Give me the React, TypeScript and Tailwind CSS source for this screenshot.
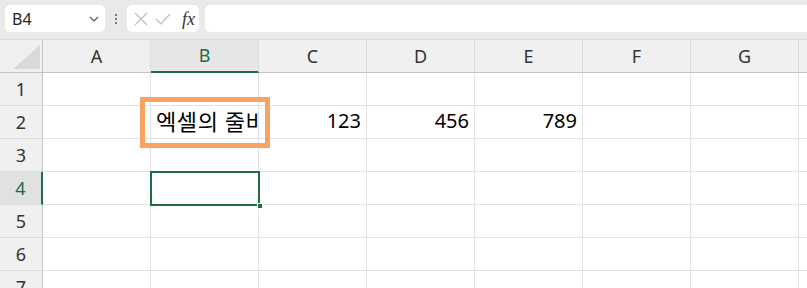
import React from "react";

const COLS = ["A", "B", "C", "D", "E", "F", "G"];
const ROWS = [1, 2, 3, 4, 5, 6, 7];

const data: Record<string, { v: string; align: "left" | "right"; size: string }> = {
  "B2": { v: "엑셀의 줄바꿈", align: "left", size: "text-[22px] tracking-[0.6px]" },
  "C2": { v: "123", align: "right", size: "text-[20px]" },
  "D2": { v: "456", align: "right", size: "text-[20px]" },
  "E2": { v: "789", align: "right", size: "text-[20px]" },
};

const font = { fontFamily: '"Noto Sans", "Noto Sans CJK KR", sans-serif' };

export default function App() {
  return (
    <div className="w-[807px] h-[288px] overflow-hidden bg-white relative" style={font}>
      {/* toolbar */}
      <div className="h-[40px] bg-[#e9e9e9] flex items-start pt-[5px] border-b border-[#dcdcdc]">
        <div className="ml-[5px] w-[100px] h-[27px] bg-white rounded-[5px] flex items-center justify-between pl-[7px] pr-[6px] text-[16px] text-[#222]">
          <span>B4</span>
          <svg width="10" height="6" viewBox="0 0 10 6" className="mt-[1px]">
            <path d="M1 1 L5 5 L9 1" fill="none" stroke="#555" strokeWidth="1.2" />
          </svg>
        </div>
        <div className="w-[22px] h-[27px] flex flex-col items-center justify-center gap-[2px]">
          <div className="w-[2px] h-[2px] bg-[#555] rounded-full" />
          <div className="w-[2px] h-[2px] bg-[#555] rounded-full" />
          <div className="w-[2px] h-[2px] bg-[#555] rounded-full" />
        </div>
        <div className="w-[72px] h-[27px] bg-white rounded-[5px] flex items-center pl-[7px] gap-[7px]">
          <svg width="14" height="14" viewBox="0 0 14 14">
            <path d="M1 1 L13 13 M13 1 L1 13" stroke="#bdbdbd" strokeWidth="1.2" fill="none" />
          </svg>
          <svg width="16" height="14" viewBox="0 0 16 14">
            <path d="M1 7 L6 12 L15 2" stroke="#bdbdbd" strokeWidth="1.2" fill="none" />
          </svg>
          <span
            className="ml-[4px] text-[18px] italic text-[#333] leading-none"
            style={{ fontFamily: '"Liberation Serif", "DejaVu Serif", serif' }}
          >
            fx
          </span>
        </div>
        <div className="ml-[6px] flex-1 h-[27px] bg-white rounded-l-[5px]" />
      </div>

      {/* grid */}
      <div className="relative">
        <div className="grid grid-cols-[43px_repeat(7,108px)_1fr] auto-rows-[33px]">
          {/* header row */}
          <div className="bg-[#f0f0f0] border-r border-b border-[#c4c4c4] relative">
            <svg width="43" height="33" className="absolute left-0 top-0">
              <polygon points="40,5 40,29 13,29" fill="#d9d9d9" />
            </svg>
          </div>
          {COLS.map((c) => (
            <div
              key={c}
              className={
                c === "B"
                  ? "bg-[#e6e6e6] border-r border-[#dcdcdc] border-b-2 border-b-[#1e6c41] flex items-center justify-center text-[18px] text-[#1e6c41]"
                  : "bg-[#f0f0f0] border-r border-[#dcdcdc] border-b border-b-[#c4c4c4] flex items-center justify-center text-[18px] text-[#333]"
              }
            >
              {c}
            </div>
          ))}
          <div className="bg-[#f0f0f0] border-b border-[#c4c4c4]" />

          {ROWS.map((r) => (
            <React.Fragment key={r}>
              <div
                className={
                  r === 4
                    ? "bg-[#e1e1e1] border-r-2 border-r-[#1e6c41] border-b border-b-[#dcdcdc] flex items-center justify-center text-[18px] text-[#1e6c41]"
                    : "bg-[#f0f0f0] border-r border-r-[#c4c4c4] border-b border-b-[#dcdcdc] flex items-center justify-center text-[18px] text-[#333]"
                }
              >
                {r}
              </div>
              {COLS.map((c) => {
                const d = data[c + r];
                return (
                  <div
                    key={c}
                    className={
                      "border-r border-b border-[#e1e1e1] overflow-hidden whitespace-nowrap flex items-end pb-[4px] text-black " +
                      (d ? d.size + " " : "") +
                      (d && d.align === "right" ? "justify-end pr-[5px]" : "justify-start pl-[5px]")
                    }
                  >
                    {d ? <span className="leading-[26px]">{d.v}</span> : null}
                  </div>
                );
              })}
              <div className="border-b border-[#e1e1e1]" />
            </React.Fragment>
          ))}
        </div>

        {/* selection B4 */}
        <div className="absolute left-[150px] top-[131px] w-[110px] h-[35px] border-2 border-[#1e6c41]" />
        <div className="absolute left-[257px] top-[163px] w-[6px] h-[6px] bg-[#1e6c41] border border-white" />

        {/* orange highlight */}
        <div className="absolute left-[140px] top-[57px] w-[130px] h-[51px] border-[5px] border-[#f8a264]" />
      </div>
    </div>
  );
}
